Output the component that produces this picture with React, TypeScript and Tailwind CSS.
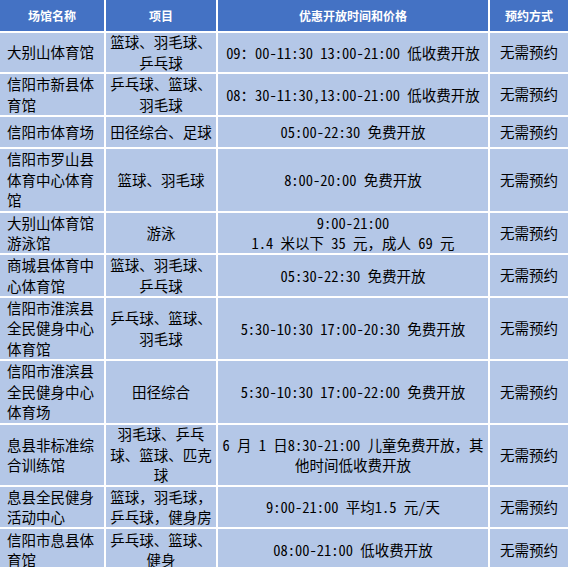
const rows: { h: string; name: string[]; sport: string[]; time: string[] }[] = [
  { h: "h-[39px]", name: ["大别山体育馆"], sport: ["篮球、羽毛球、", "乒乓球"], time: ["09：00-11:30 13:00-21:00 低收费开放"] },
  { h: "h-[41px]", name: ["信阳市新县体", "育馆"], sport: ["乒乓球、篮球、", "羽毛球"], time: ["08：30-11:30,13:00-21:00 低收费开放"] },
  { h: "h-[30px]", name: ["信阳市体育场"], sport: ["田径综合、足球"], time: ["05:00-22:30 免费开放"] },
  { h: "h-[62px]", name: ["信阳市罗山县", "体育中心体育", "馆"], sport: ["篮球、羽毛球"], time: ["8:00-20:00 免费开放"] },
  { h: "h-[40px]", name: ["大别山体育馆", "游泳馆"], sport: ["游泳"], time: ["9:00-21:00", "1.4 米以下 35 元，成人 69 元"] },
  { h: "h-[41px]", name: ["商城县体育中", "心体育馆"], sport: ["篮球、羽毛球、", "乒乓球"], time: ["05:30-22:30 免费开放"] },
  { h: "h-[61px]", name: ["信阳市淮滨县", "全民健身中心", "体育馆"], sport: ["乒乓球、篮球、", "羽毛球"], time: ["5:30-10:30 17:00-20:30 免费开放"] },
  { h: "h-[62px]", name: ["信阳市淮滨县", "全民健身中心", "体育场"], sport: ["田径综合"], time: ["5:30-10:30 17:00-22:00 免费开放"] },
  { h: "h-[60px]", name: ["息县非标准综", "合训练馆"], sport: ["羽毛球、乒乓", "球、篮球、匹克", "球"], time: ["6 月 1 日8:30-21:00 儿童免费开放，其", "他时间低收费开放"] },
  { h: "h-[40px]", name: ["息县全民健身", "活动中心"], sport: ["篮球，羽毛球，", "乒乓球，健身房"], time: ["9:00-21:00 平均1.5 元/天"] },
  { h: "h-[42px]", name: ["信阳市息县体", "育馆"], sport: ["乒乓球、篮球、", "健身"], time: ["08:00-21:00 低收费开放"] },
];

const cols = "grid grid-cols-[104px_110px_270px_78px] grid-rows-[100%] gap-x-[2px]";

function Lines({ items }: { items: string[] }) {
  return (
    <>
      {items.map((t, i) => (
        <div key={i} className="whitespace-nowrap">
          {t}
        </div>
      ))}
    </>
  );
}

export default function App() {
  return (
    <div
      className="w-[568px] h-[567px] overflow-hidden bg-white flex flex-col gap-y-[2px] text-black"
      style={{ fontFamily: "'Noto Sans Mono CJK SC', 'Noto Sans CJK SC', sans-serif" }}
    >
      <div className={`${cols} h-[31px] shrink-0`}>
        {["场馆名称", "项目", "优惠开放时间和价格", "预约方式"].map((t) => (
          <div
            key={t}
            className="bg-[#4472c4] text-white font-bold text-[12px] flex items-center justify-center"
            style={{ fontFamily: "'Noto Sans CJK SC', sans-serif" }}
          >
            {t}
          </div>
        ))}
      </div>
      {rows.map((r, i) => (
        <div key={i} className={`${cols} ${r.h} shrink-0 text-[14.5px] leading-[20.5px]`}>
          <div className="bg-[#b4c7e7] flex flex-col justify-center pl-[7px] min-h-0">
            <Lines items={r.name} />
          </div>
          <div className="bg-[#b4c7e7] flex flex-col justify-center items-center min-h-0">
            <Lines items={r.sport} />
          </div>
          <div className="bg-[#b4c7e7] flex flex-col justify-center items-center min-h-0 leading-[20px]">
            <Lines items={r.time} />
          </div>
          <div className="bg-[#b4c7e7] flex items-center justify-center min-h-0">无需预约</div>
        </div>
      ))}
    </div>
  );
}
